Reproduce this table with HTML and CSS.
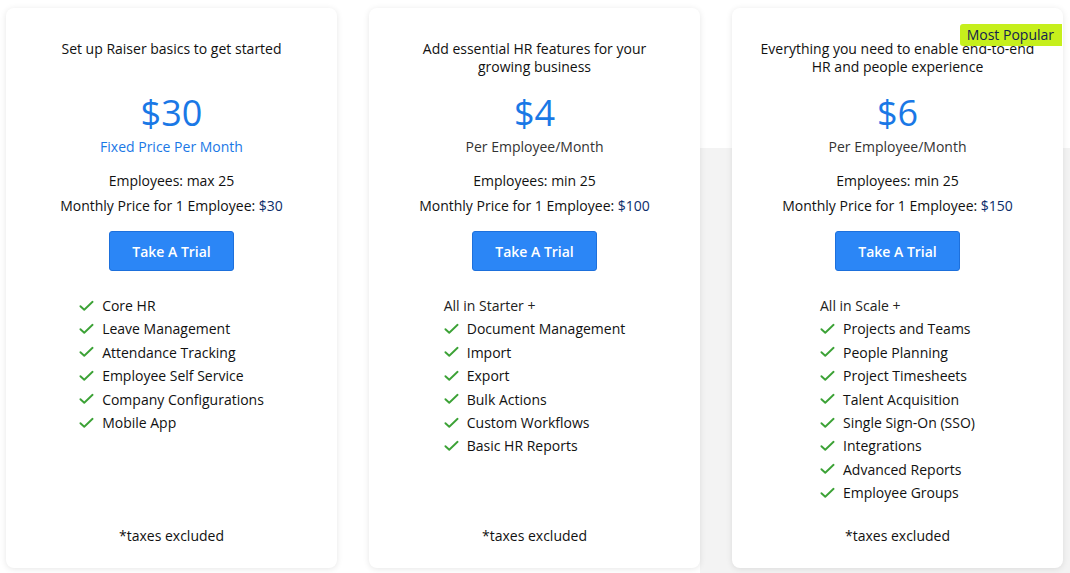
FILE: index.html
```html
<!DOCTYPE html>
<html>
<head>
<meta charset="utf-8">
<link rel="stylesheet" href="styles.css">
</head>
<body>
<div class="page">
  <div class="card">
    <p class="tagline">Set up Raiser basics to get started</p>
    <div class="price">$30</div>
    <div class="period period-blue">Fixed Price Per Month</div>
    <div class="info info-first">Employees: max 25</div>
    <div class="info">Monthly Price for 1 Employee: <span class="amount">$30</span></div>
    <button class="trial">Take A Trial</button>
    <ul class="features">
      <li><svg class="check" viewBox="0 0 16 12"><path d="M1.5 6.2 L5.6 10 L14.5 1.5"/></svg>Core HR</li>
      <li><svg class="check" viewBox="0 0 16 12"><path d="M1.5 6.2 L5.6 10 L14.5 1.5"/></svg>Leave Management</li>
      <li><svg class="check" viewBox="0 0 16 12"><path d="M1.5 6.2 L5.6 10 L14.5 1.5"/></svg>Attendance Tracking</li>
      <li><svg class="check" viewBox="0 0 16 12"><path d="M1.5 6.2 L5.6 10 L14.5 1.5"/></svg>Employee Self Service</li>
      <li><svg class="check" viewBox="0 0 16 12"><path d="M1.5 6.2 L5.6 10 L14.5 1.5"/></svg>Company Configurations</li>
      <li><svg class="check" viewBox="0 0 16 12"><path d="M1.5 6.2 L5.6 10 L14.5 1.5"/></svg>Mobile App</li>
    </ul>
    <div class="taxes">*taxes excluded</div>
  </div>

  <div class="card">
    <p class="tagline">Add essential HR features for your growing business</p>
    <div class="price">$4</div>
    <div class="period">Per Employee/Month</div>
    <div class="info info-first">Employees: min 25</div>
    <div class="info">Monthly Price for 1 Employee: <span class="amount">$100</span></div>
    <button class="trial">Take A Trial</button>
    <ul class="features">
      <li class="plain">All in Starter +</li>
      <li><svg class="check" viewBox="0 0 16 12"><path d="M1.5 6.2 L5.6 10 L14.5 1.5"/></svg>Document Management</li>
      <li><svg class="check" viewBox="0 0 16 12"><path d="M1.5 6.2 L5.6 10 L14.5 1.5"/></svg>Import</li>
      <li><svg class="check" viewBox="0 0 16 12"><path d="M1.5 6.2 L5.6 10 L14.5 1.5"/></svg>Export</li>
      <li><svg class="check" viewBox="0 0 16 12"><path d="M1.5 6.2 L5.6 10 L14.5 1.5"/></svg>Bulk Actions</li>
      <li><svg class="check" viewBox="0 0 16 12"><path d="M1.5 6.2 L5.6 10 L14.5 1.5"/></svg>Custom Workflows</li>
      <li><svg class="check" viewBox="0 0 16 12"><path d="M1.5 6.2 L5.6 10 L14.5 1.5"/></svg>Basic HR Reports</li>
    </ul>
    <div class="taxes">*taxes excluded</div>
  </div>

  <div class="card card-popular">
    <span class="badge">Most Popular</span>
    <p class="tagline">Everything you need to enable end-to-end HR and people experience</p>
    <div class="price">$6</div>
    <div class="period">Per Employee/Month</div>
    <div class="info info-first">Employees: min 25</div>
    <div class="info">Monthly Price for 1 Employee: <span class="amount">$150</span></div>
    <button class="trial">Take A Trial</button>
    <ul class="features">
      <li class="plain">All in Scale +</li>
      <li><svg class="check" viewBox="0 0 16 12"><path d="M1.5 6.2 L5.6 10 L14.5 1.5"/></svg>Projects and Teams</li>
      <li><svg class="check" viewBox="0 0 16 12"><path d="M1.5 6.2 L5.6 10 L14.5 1.5"/></svg>People Planning</li>
      <li><svg class="check" viewBox="0 0 16 12"><path d="M1.5 6.2 L5.6 10 L14.5 1.5"/></svg>Project Timesheets</li>
      <li><svg class="check" viewBox="0 0 16 12"><path d="M1.5 6.2 L5.6 10 L14.5 1.5"/></svg>Talent Acquisition</li>
      <li><svg class="check" viewBox="0 0 16 12"><path d="M1.5 6.2 L5.6 10 L14.5 1.5"/></svg>Single Sign-On (SSO)</li>
      <li><svg class="check" viewBox="0 0 16 12"><path d="M1.5 6.2 L5.6 10 L14.5 1.5"/></svg>Integrations</li>
      <li><svg class="check" viewBox="0 0 16 12"><path d="M1.5 6.2 L5.6 10 L14.5 1.5"/></svg>Advanced Reports</li>
      <li><svg class="check" viewBox="0 0 16 12"><path d="M1.5 6.2 L5.6 10 L14.5 1.5"/></svg>Employee Groups</li>
    </ul>
    <div class="taxes">*taxes excluded</div>
  </div>
</div>
</body>
</html>
```

FILE: styles.css
```css
* { box-sizing: border-box; }

html, body {
  margin: 0;
  padding: 0;
}

body {
  width: 1070px;
  height: 573px;
  overflow: hidden;
  font-family: "Open Sans", "Noto Sans", sans-serif;
  font-size: 14px;
  color: #111;
  background:
    linear-gradient(#f3f3f3, #f3f3f3) no-repeat 700px 148px / 370px 425px,
    #ffffff;
}

.page {
  display: flex;
  gap: 32px;
  padding: 8px 0 0 6px;
}

.card {
  position: relative;
  width: 331px;
  height: 560px;
  background: #fff;
  border-radius: 8px;
  box-shadow: 0 1px 6px rgba(0, 0, 0, 0.10);
  display: flex;
  flex-direction: column;
  align-items: center;
  padding: 32px 20px 23px;
  text-align: center;
}

.badge {
  position: absolute;
  top: 16px;
  right: 1px;
  z-index: 1;
  background: #c6ef1c;
  color: #13234f;
  font-size: 14px;
  line-height: 22px;
  padding: 0 8px 0 7px;
  border-radius: 3px 0 0 3px;
}

.tagline {
  margin: 0;
  line-height: 18px;
  min-height: 36px;
  font-size: 14px;
  max-width: 277px;
}

.price {
  margin-top: 17px;
  font-size: 36px;
  line-height: 40px;
  color: #1a78e6;
}

.period {
  margin-top: 5px;
  line-height: 18px;
  color: #333;
}

.period-blue { color: #1a78e6; }

.info {
  margin-top: 7px;
  line-height: 18px;
}

.info-first { margin-top: 16px; }

.amount { color: #0c2d6b; }

.trial {
  margin-top: 16px;
  width: 125px;
  height: 40px;
  background: #2b86f6;
  border: 1px solid #1d70dc;
  border-radius: 3px;
  color: #fff;
  font-family: inherit;
  font-size: 14px;
  font-weight: 600;
  padding: 0;
}

.features {
  list-style: none;
  margin: 23px 0 0;
  padding: 0;
  text-align: left;
}

.features li {
  display: flex;
  align-items: center;
  line-height: 23.4px;
  height: 23.4px;
  white-space: nowrap;
}

.features li.plain { color: #222; }

.check {
  width: 15px;
  height: 12px;
  margin-right: 8px;
  flex: none;
  fill: none;
  stroke: #3ca236;
  stroke-width: 2;
  stroke-linecap: round;
  stroke-linejoin: round;
}

.taxes {
  margin-top: auto;
  line-height: 18px;
}
```
